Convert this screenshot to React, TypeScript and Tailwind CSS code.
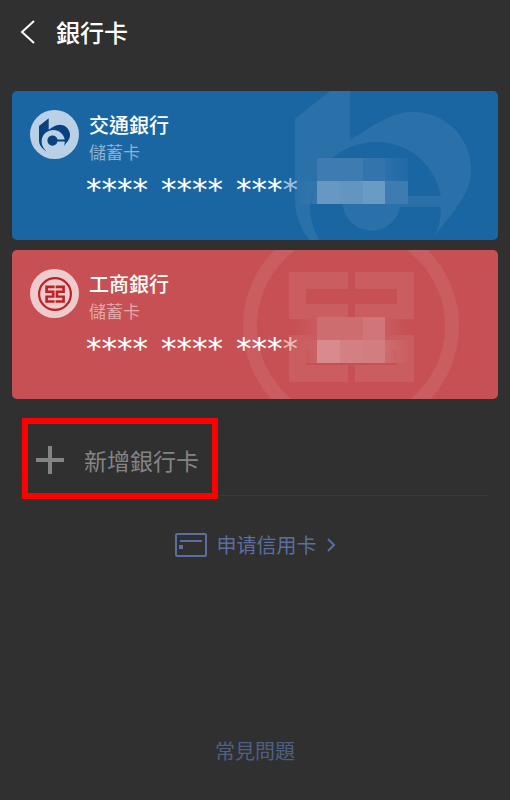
import React from "react";

interface LogoProps {
  className?: string;
}

interface BankCardProps {
  name: string;
  kind: string;
  cardClass: string;
  badgeClass: string;
  logo: React.ReactNode;
  watermark: React.ReactNode;
  mask: React.ReactNode;
}

// Bank of Communications mark
const BocomLogo: React.FC<LogoProps> = ({ className }) => (
  <svg viewBox="0 0 176 190" className={className} fill="currentColor" aria-hidden="true">
    <path d="M0 44 55 0V65C74 54 94 37 118 37C150 37 176 62 176 95C176 118 160 135 140 160C145 150 146 142 146 132H105A29 29 0 1 1 105 121H146C141 91 114 67 82 67C44 67 15 96 15 132C15 152 25 172 43 188C18 175 0 152 0 125Z" />
  </svg>
);

// Industrial and Commercial Bank of China mark
const IcbcLogo: React.FC<LogoProps> = ({ className }) => (
  <svg viewBox="0 0 216 216" className={className} fill="currentColor" aria-hidden="true">
    <circle cx="108" cy="108" r="101" fill="none" stroke="currentColor" strokeWidth="14" />
    <path d="M46 54H105V71H63V86H105V132H63V147H105V164H46V117H88V101H46Z" />
    <path d="M171 54H112V71H154V86H112V132H154V147H112V164H171V117H129V101H171Z" />
  </svg>
);

const BankCard: React.FC<BankCardProps> = ({
  name,
  kind,
  cardClass,
  badgeClass,
  logo,
  watermark,
  mask,
}) => {
  return (
    <li className={`relative flex min-h-[149px] gap-2.5 overflow-hidden rounded-[5px] pt-[19px] pl-[18px] ${cardClass}`}>
      {watermark}
      <div className={`flex size-[49px] shrink-0 items-center justify-center rounded-full ${badgeClass}`}>
        {logo}
      </div>
      <div className="relative">
        <h2 className="text-[20px] leading-[30px] font-medium text-white">{name}</h2>
        <p className="text-[17px] leading-6 text-white/50">{kind}</p>
        <p className="mt-[5px] -ml-[3px] flex gap-[13px] font-['DejaVu_Sans',sans-serif] text-[31px] leading-10 text-white">
          <span>****</span>
          <span>****</span>
          <span>
            ***<span className="text-white/60">*</span>
          </span>
        </p>
        {mask}
      </div>
    </li>
  );
};

const App: React.FC = () => {
  return (
    <main className="flex min-h-screen flex-col bg-[#303030] font-['Noto_Sans_CJK_TC',sans-serif]">
      <header className="flex h-[63px] items-center gap-5 pl-5">
        <button type="button" aria-label="返回" className="text-white">
          <svg viewBox="0 0 16 24" className="h-6 w-4" fill="none" stroke="currentColor" strokeWidth="2">
            <path d="M14 1 2 12 14 23" />
          </svg>
        </button>
        <h1 className="text-[24px] leading-8 font-medium text-white">銀行卡</h1>
      </header>

      <ul className="mt-7 flex flex-col gap-2.5 px-3">
        <BankCard
          name="交通銀行"
          kind="儲蓄卡"
          cardClass="bg-[#1a66a3]"
          badgeClass="bg-[#bad1e5] text-[#07417f]"
          logo={<BocomLogo className="h-[34px] w-[31px]" />}
          watermark={<BocomLogo className="absolute -top-4 right-[27px] h-[190px] w-[176px] text-white/7" />}
          mask={
            <div className="absolute top-12 left-[206px] grid grid-cols-[22px_23px_23px_22px_23px]" aria-hidden="true">
              <span className="h-[23px] bg-linear-to-l from-[#2b70aa] to-[#2b70aa]/0" />
              <span className="h-[23px] bg-[#3d7bb0]" />
              <span className="h-[23px] bg-[#3d7bb0]" />
              <span className="h-[23px] bg-[#3474ac]" />
              <span className="h-[23px] bg-linear-to-r from-[#2b70aa] to-[#2b70aa]/40" />
              <span className="h-[23px] bg-linear-to-l from-[#3575ad] to-[#3575ad]/0" />
              <span className="h-[23px] bg-[#6698c2]" />
              <span className="h-[23px] bg-[#6296c0]" />
              <span className="h-[23px] bg-[#6a9bc4]" />
              <span className="h-[23px] bg-[#3d7bb0]" />
            </div>
          }
        />
        <BankCard
          name="工商銀行"
          kind="儲蓄卡"
          cardClass="bg-[#c65053]"
          badgeClass="bg-[#eecbcc] text-[#be2026]"
          logo={<IcbcLogo className="size-[34px]" />}
          watermark={<IcbcLogo className="absolute -top-8 right-[39px] size-[216px] text-white/8" />}
          mask={
            <div className="absolute top-12 left-[206px] grid grid-cols-[22px_23px_23px_22px_23px]" aria-hidden="true">
              <span className="h-[23px] bg-linear-to-l from-[#c95c5f] to-[#c95c5f]/0" />
              <span className="h-[23px] bg-[#cd6d70]" />
              <span className="h-[23px] bg-[#cd6d70]" />
              <span className="h-[23px] bg-[#d07679]" />
              <span className="h-[23px] bg-linear-to-r from-[#c95c5f] to-[#c95c5f]/0" />
              <span className="h-[23px] bg-linear-to-l from-[#ca6265] to-[#ca6265]/0" />
              <span className="h-[23px] bg-[#d88b8d]" />
              <span className="h-[23px] bg-[#d38083]" />
              <span className="h-[23px] bg-[#d27d80]" />
              <span className="h-[23px] bg-linear-to-r from-[#cd6d70] to-[#cb6669]/20" />
            </div>
          }
        />
      </ul>

      <div className="mx-[22px] mt-[19px] flex items-end">
        <button
          type="button"
          className="flex h-[81px] w-[196px] items-center gap-5 border-[6px] border-[#ff0000] pt-0.5 pl-2 text-[#848484]"
        >
          <svg viewBox="0 0 28 28" className="size-7" stroke="currentColor" strokeWidth="4" aria-hidden="true">
            <path d="M14 0V28M0 14H28" />
          </svg>
          <span className="text-[23px] leading-8">新增銀行卡</span>
        </button>
        <div className="mb-[3px] h-px flex-1 bg-[#3a3a3a]" />
      </div>

      <a href="#apply" className="mt-[30px] flex items-center gap-2.5 self-center text-[#5a6f9e]">
        <svg viewBox="0 0 32 24" className="h-6 w-8" fill="none" stroke="currentColor" strokeWidth="2" aria-hidden="true">
          <rect x="1" y="1" width="30" height="22" rx="1" />
          <path d="M5 8H27" />
          <path d="M4 12H8V16H4Z" fill="currentColor" stroke="none" />
        </svg>
        <span className="font-['Noto_Sans_CJK_SC',sans-serif] text-[20px] leading-8">申请信用卡</span>
        <svg viewBox="0 0 9 14" className="h-3.5 w-[9px]" fill="none" stroke="currentColor" strokeWidth="2" aria-hidden="true">
          <path d="M1 1 7 7 1 13" />
        </svg>
      </a>

      <a href="#faq" className="mt-auto mb-[33px] self-center text-[20px] leading-8 text-[#4d6084]">
        常見問題
      </a>
    </main>
  );
};

export default App;
